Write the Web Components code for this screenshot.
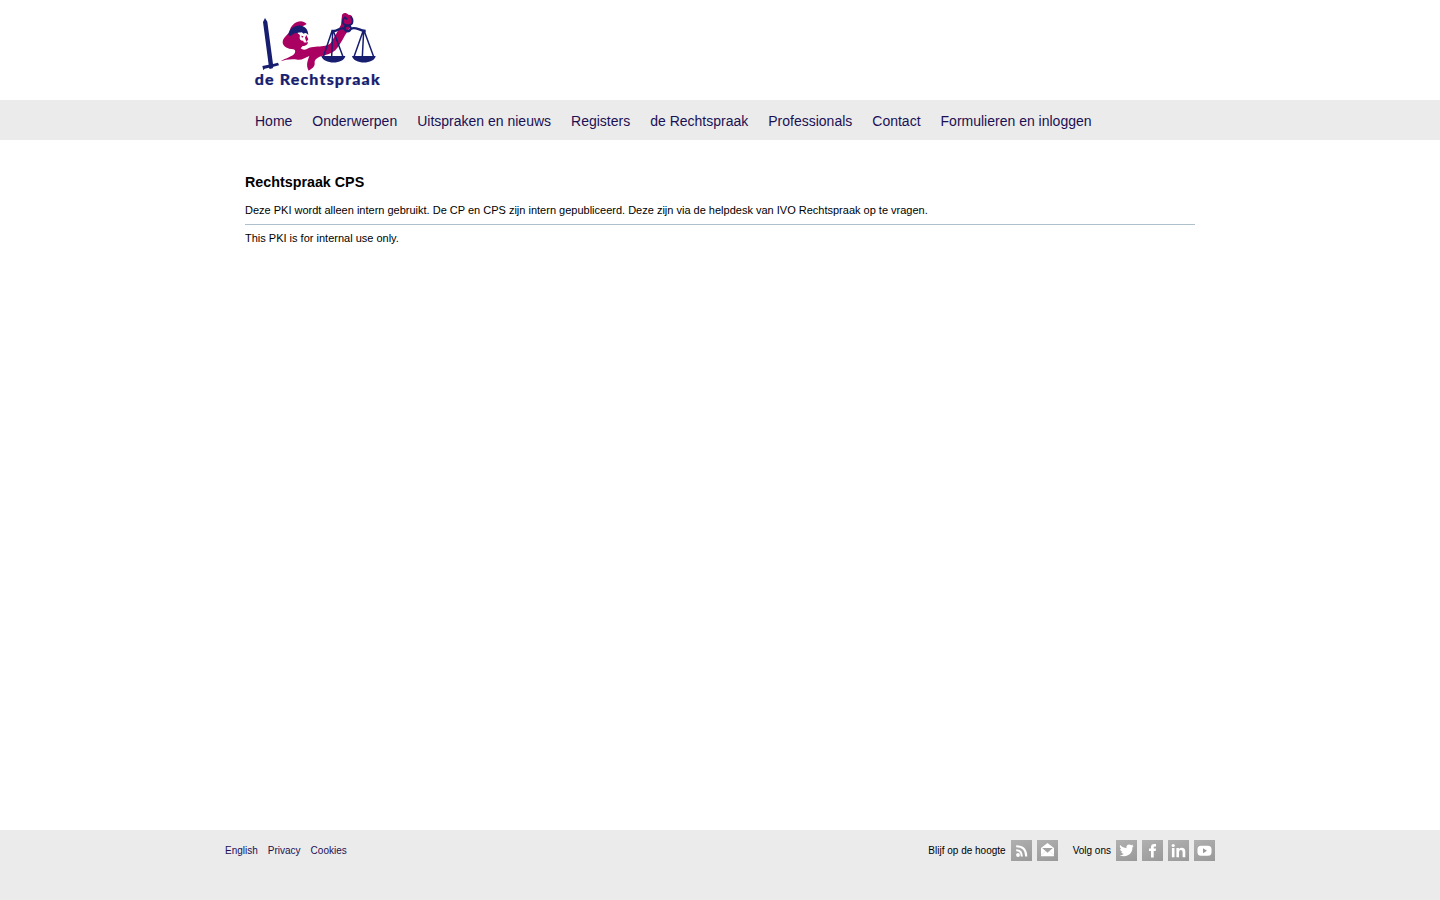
<!DOCTYPE html>
<html lang="nl">
<head>
<meta charset="utf-8">
<title>Rechtspraak CPS</title>
<style>
html,body{margin:0;height:100%}
body{font:11px/15px "Liberation Sans",Arial,sans-serif;color:#000;background:#fff}
</style>
</head>
<body>
<cps-page>
  <cps-logo slot="logo"></cps-logo>
  <cps-nav slot="nav">
    <cps-link>Home</cps-link><cps-link>Onderwerpen</cps-link><cps-link>Uitspraken en nieuws</cps-link><cps-link>Registers</cps-link><cps-link>de Rechtspraak</cps-link><cps-link>Professionals</cps-link><cps-link>Contact</cps-link><cps-link>Formulieren en inloggen</cps-link>
  </cps-nav>
  <cps-article>
    <span slot="title">Rechtspraak CPS</span>
    <span slot="dutch">Deze PKI wordt alleen intern gebruikt. De CP en CPS zijn intern gepubliceerd. Deze zijn via de helpdesk van IVO Rechtspraak op te vragen.</span>
    <span slot="english">This PKI is for internal use only.</span>
  </cps-article>
  <cps-footer slot="footer">
    <cps-link slot="links">English</cps-link><cps-link slot="links">Privacy</cps-link><cps-link slot="links">Cookies</cps-link>
    <cps-social slot="social" label="Blijf op de hoogte" icons="rss mail"></cps-social>
    <cps-social slot="social" label="Volg ons" icons="twitter facebook linkedin youtube"></cps-social>
  </cps-footer>
</cps-page>
<script>
const define = (name, html) => customElements.define(name, class extends HTMLElement {
  constructor() {
    super();
    this.attachShadow({mode: 'open'}).innerHTML = html;
  }
});

define('cps-link', `<style>:host{display:block;white-space:nowrap}a{color:#1b1054;text-decoration:none}</style><a href="#"><slot></slot></a>`);

define('cps-logo', `<style>:host{display:block;width:136px;height:90px}svg{display:block}
text{font:900 43px Lato,sans-serif;fill:#171e70;stroke:#171e70;stroke-width:.6px}</style>
<svg width="136" height="90" viewBox="0 0 408 270" role="img">
<path fill="#a90061" d="M170 57C158 43 141 49 132 56C123 63 119 73 118 82C112 90 98 99 98 112C98 124 113 133 130 133C136 134 137 140 134 145C128 155 108 159 92 169C107 163 126 161 143 164C155 166 165 158 178 153C173 168 167 180 176 197C184 192 195 186 194 174C193 165 201 158 213 154C228 150 245 146 256 136C266 125 276 108 285 91L295 76L306 55C309 40 309 28 295 29C289 22 279 22 276 30L273 59L260 84L248 104C241 119 233 121 221 123C205 126 188 123 172 131C165 136 157 135 152 130L158 123C168 123 175 117 173 110C166 114 160 114 160 107C153 108 148 104 149 97C151 91 149 88 144 86L140 74C150 65 160 64 170 57Z"/>
<path fill="#a90061" d="M169 90L175 103L169 111L165 98ZM154 92L161 94L156 99Z"/>
<g fill="#171e70">
<path d="M115 88C118 72 134 60 152 62C166 64 174 73 175 90C170 84 166 82 161 86L155 82C145 84 134 82 125 91L119 94Z"/>
<path d="M39 51L45 39L52 50L69 177L84 173L87 181L70 185L68 190L59 192L57 188L44 191L40 196L37 183L56 179Z"/>
<path d="M214 153H286C282 179 220 179 214 153ZM306 153H377C373 179 311 179 306 153Z"/>
</g>
<g fill="none" stroke="#171e70">
<path stroke-width="7" d="M244 78H253C264 78 266 66 284 71M302 72C316 62 326 77 347 78"/>
<circle cx="293" cy="70" r="9" stroke-width="7"/>
<path stroke-width="5" d="M289 61C275 58 276 44 284 37M297 61C311 58 310 43 302 35M283 36L291 43"/>
<path stroke-width="4.5" d="M246 78L220 155M248 79L245 155M250 78L279 155M339 79L312 155M341 79L337 155M343 79L371 155"/>
</g>
<text transform="translate(14 239) scale(1.12 1)" textLength="335">de Rechtspraak</text>
</svg>`);

define('cps-nav', `<style>:host{display:flex;gap:20px;width:930px;margin:0 auto;font-size:14px;line-height:20px;padding:11px 10px 9px}</style><slot></slot>`);

define('cps-article', `<style>:host{display:block}h1{font-size:14.3px;line-height:20px;margin:0 0 11px}p{margin:0}
.nl{padding-bottom:6px;border-bottom:1px solid #adc0cc;margin-bottom:6px}</style>
<h1><slot name="title"></slot></h1><p class="nl"><slot name="dutch"></slot></p><p><slot name="english"></slot></p>`);

define('cps-footer', `<style>:host{display:flex;justify-content:space-between;width:990px;margin:0 auto;padding-top:10px;font-size:10px;line-height:21px}
div{display:flex;gap:10px}.social{gap:15px}</style>
<div><slot name="links"></slot></div><div class="social"><slot name="social"></slot></div>`);

const glyphs = {
  rss: `<circle cx="7" cy="15" r="1.9" fill="#fff"/><path fill="none" stroke="#fff" stroke-width="2.1" d="M5.2 10.2Q10.8 10.2 10.8 16.6M5.2 6.3Q15.2 6.3 15.2 16.6"/>`,
  mail: `<path fill="#fff" d="M4 8L10.5 3L17 8V16.2H4Z"/><path fill="#a2a2a2" d="M5.2 8.1H15.8L10.5 12.8Z"/><path stroke="#ddd" stroke-width=".6" d="M4 15L8.7 11.3M17 15L12.3 11.3"/>`,
  twitter: `<path fill="#fff" d="M4 5Q7 8.3 10.4 8.3Q10.1 4.6 13.2 4.5Q14.5 4.5 15.3 5.3L17.3 4.6L16.3 6.2L17.7 5.9L16.4 7.4Q16.4 12 13.2 14.6Q9 17.5 3.6 15.2Q6.3 15.2 7.8 13.9Q5.7 13.5 5.2 12L6.3 11.8Q4.2 11 4 8.9L5.3 9.2Q3 7.2 4 5Z"/>`,
  facebook: `<path fill="#fff" d="M9 17.5V11H7V8.6H9V7Q9 4 12 4H14V6.5H12.7Q11.7 6.5 11.7 7.5V8.6H14L13.7 11H11.7V17.5Z"/>`,
  linkedin: `<circle cx="5.2" cy="5.5" r="1.6" fill="#fff"/><path fill="#fff" d="M3.9 8H6.5V17.2H3.9ZM8.4 8H10.9V9.2Q11.7 7.8 13.7 7.8Q17.3 7.8 17.3 11.5V17.2H14.6V12Q14.6 10 12.8 10Q11 10 11 12.2V17.2H8.4Z"/>`,
  youtube: `<rect x="3.5" y="5.8" width="14" height="10" rx="3.5" fill="#fff"/><path fill="#999" d="M9 8.3L13 10.8L9 13.3Z"/>`
};

customElements.define('cps-social', class extends HTMLElement {
  constructor() {
    super();
    this.attachShadow({mode: 'open'});
  }
  connectedCallback() {
    this.shadowRoot.innerHTML = `<style>:host{display:flex;gap:5px;white-space:nowrap}
    a{display:block;width:21px;height:21px;background:linear-gradient(155deg,#b0b0b0,#999)}svg{display:block}</style>
    <span>${this.getAttribute('label')}</span>` + this.getAttribute('icons').split(' ').map(n =>
      `<a href="#" aria-label="${n}"><svg width="21" height="21" viewBox="0 0 21 21">${glyphs[n]}</svg></a>`).join('');
  }
});

define('cps-page', `<style>:host{display:flex;flex-direction:column;height:100vh}
header{width:940px;height:95px;margin:0 auto;padding-top:5px}
nav{background:#ebebeb;height:40px}
main{flex:1;width:950px;margin:0 auto;padding-top:32px}
footer{background:#ebebeb;height:70px}</style>
<header><slot name="logo"></slot></header><nav><slot name="nav"></slot></nav><main><slot></slot></main><footer><slot name="footer"></slot></footer>`);
</script>
</body>
</html>
